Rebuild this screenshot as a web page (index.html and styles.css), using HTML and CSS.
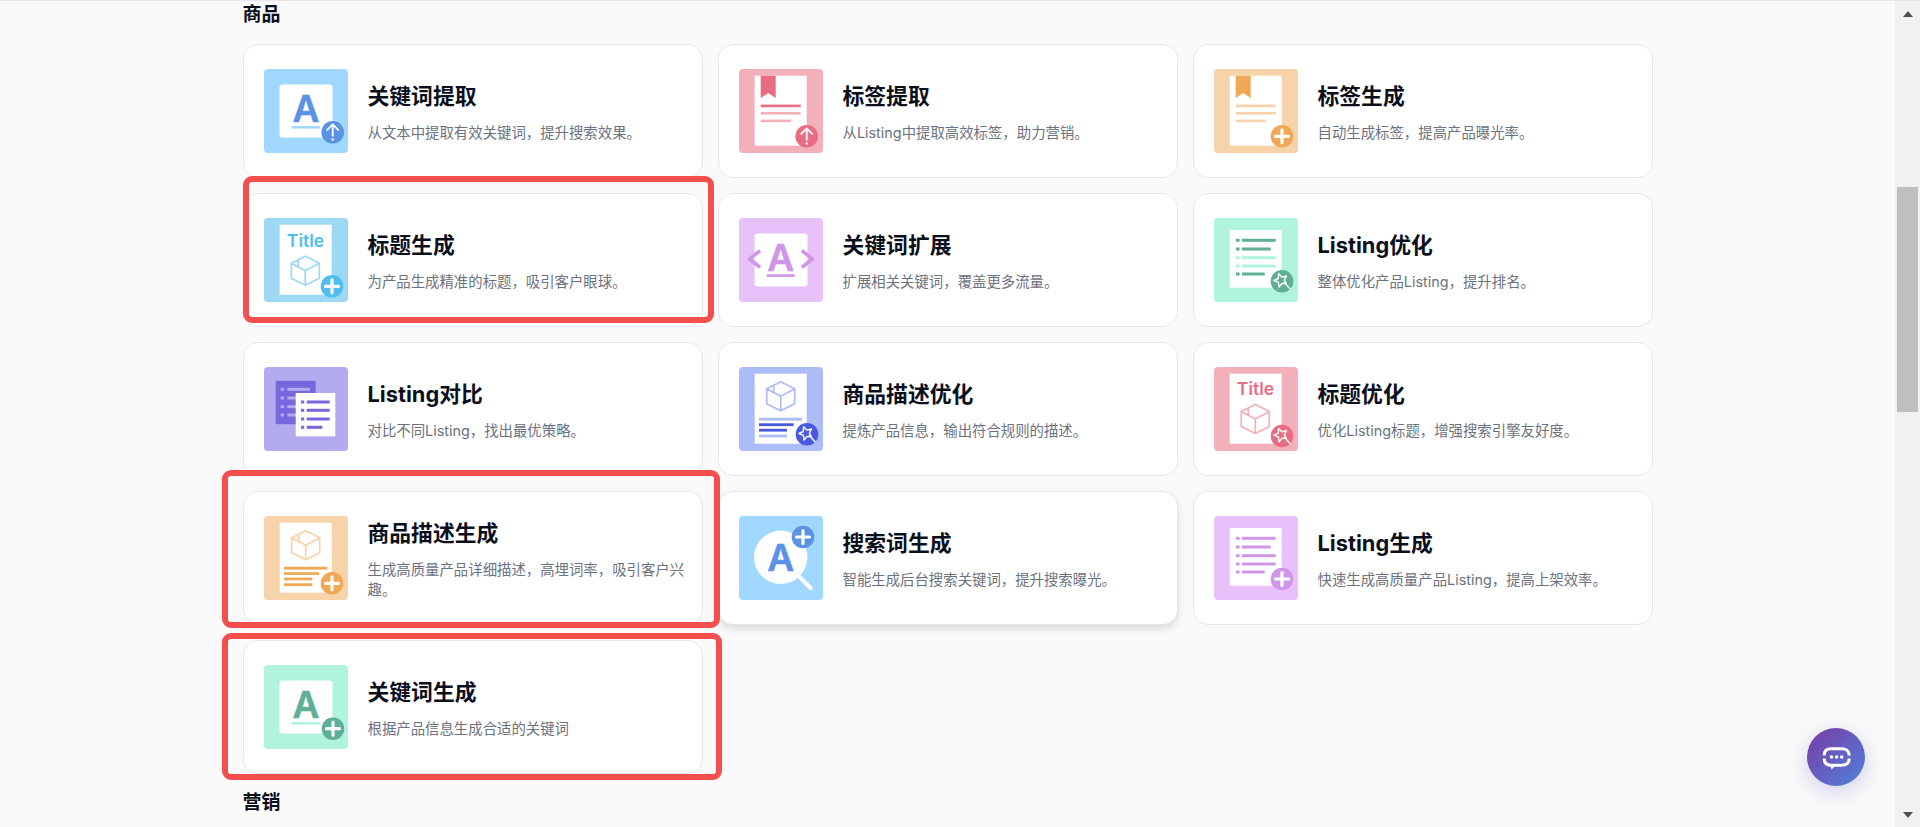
FILE: index.html
```html
<!DOCTYPE html>
<html lang="zh-CN">
<head>
<meta charset="utf-8">
<title>商品</title>
<link rel="stylesheet" href="styles.css">
</head>
<body>
<svg class="defs" aria-hidden="true">
  <defs>
    <g id="b-plus"><circle class="fg" r="11.3"/><path class="w-thick" d="M-6.5 0H6.5M0-6.5V6.5"/></g>
    <g id="b-up"><circle class="fg" r="11.3"/><path class="w-thin" d="M0 3.5V-7.5M-5.5-2.5L0-8L5.5-2.5"/><circle class="wf" cy="7.2" r="1.2"/></g>
    <g id="b-star"><circle class="fg" r="11.3"/><path class="w-star" d="M-3.4-7.6L-.1-4.2L4.5-5.3L2.3-1.1L4.4 2.4L.1 2.1L-2.9 5.7L-3.6 1L-8-.8L-3.7-2.8ZM2.5 1.5L8 7.5"/></g>
    <g id="cube"><path class="cube" d="M0-14.5L14-7.5V7.5L0 14.5L-14 7.5V-7.5ZM-14-7.5L0 0L14-7.5M0 0V14.5M-7-11V-3.5"/></g>
    <g id="doc"><rect class="pg" x="15.7" y="6.7" width="52" height="70"/></g>
    <g id="doc-s"><rect class="pg" x="15.7" y="12" width="52" height="57.7"/></g>
    <g id="sq"><rect class="pg" x="15.5" y="15.5" width="53" height="53" rx="3"/></g>
  </defs>
</svg>
<div class="page">
  <main class="main">
    <h2 class="section">商品</h2>
    <div class="grid">

      <a class="card">
        <svg class="icon t-blue" viewBox="0 0 84 84"><rect class="bg" width="84" height="84" rx="4"/><use href="#sq"/><text class="glyph" x="42" y="53" text-anchor="middle">A</text><rect class="lb" x="28" y="57" width="28" height="2.6"/><use href="#b-up" x="68.7" y="63.3"/></svg>
        <div class="text"><h3 class="name">关键词提取</h3><p class="desc">从文本中提取有效关键词，提升搜索效果。</p></div>
      </a>

      <a class="card">
        <svg class="icon t-pink" viewBox="0 0 84 84"><rect class="bg" width="84" height="84" rx="4"/><use href="#doc"/><path class="fg" d="M21.7 6.7H36.7V29L29.2 24L21.7 29Z"/><rect class="fg" x="21.7" y="35.6" width="40" height="2.6"/><rect class="lb" x="21.7" y="43" width="40" height="2.6"/><rect class="lb" x="21.7" y="50.6" width="30.3" height="2.6"/><use href="#b-up" x="67.7" y="67.3"/></svg>
        <div class="text"><h3 class="name">标签提取</h3><p class="desc">从Listing中提取高效标签，助力营销。</p></div>
      </a>

      <a class="card">
        <svg class="icon t-orange" viewBox="0 0 84 84"><rect class="bg" width="84" height="84" rx="4"/><use href="#doc"/><path class="fg" d="M21.7 6.7H36.7V29L29.2 24L21.7 29Z"/><rect class="lb" x="21.7" y="35.6" width="40" height="2.6"/><rect class="lb" x="21.7" y="43" width="40" height="2.6"/><rect class="lb" x="21.7" y="50.6" width="30.3" height="2.6"/><use href="#b-plus" x="68" y="67.3"/></svg>
        <div class="text"><h3 class="name">标签生成</h3><p class="desc">自动生成标签，提高产品曝光率。</p></div>
      </a>

      <a class="card">
        <svg class="icon t-sky" viewBox="0 0 84 84"><rect class="bg" width="84" height="84" rx="4"/><use href="#doc"/><text class="tword" x="41.5" y="29" text-anchor="middle">Title</text><use href="#cube" x="41.3" y="52.7"/><use href="#b-plus" x="68" y="68.3"/></svg>
        <div class="text"><h3 class="name">标题生成</h3><p class="desc">为产品生成精准的标题，吸引客户眼球。</p></div>
      </a>

      <a class="card">
        <svg class="icon t-purple" viewBox="0 0 84 84"><rect class="bg" width="84" height="84" rx="4"/><use href="#sq"/><text class="glyph" x="41.7" y="53" text-anchor="middle">A</text><rect class="lb2" x="27.7" y="56.3" width="28" height="2.6"/><path class="chev" d="M20 33.5L10.5 41L20 48.5M64 33.5L73.5 41L64 48.5"/></svg>
        <div class="text"><h3 class="name">关键词扩展</h3><p class="desc">扩展相关关键词，覆盖更多流量。</p></div>
      </a>

      <a class="card">
        <svg class="icon t-teal" viewBox="0 0 84 84"><rect class="bg" width="84" height="84" rx="4"/><use href="#doc-s"/>
          <rect class="fg" x="22" y="20.8" width="3.6" height="3"/><rect class="fg" x="28" y="20.8" width="33.7" height="3"/>
          <rect class="fg" x="22" y="29.5" width="3.6" height="3"/><rect class="fg" x="28" y="29.5" width="28.7" height="3"/>
          <rect class="lb" x="22" y="38.2" width="3.6" height="3"/><rect class="lb" x="28" y="38.2" width="33.7" height="3"/>
          <rect class="lb" x="22" y="46.5" width="3.6" height="3"/><rect class="lb" x="28" y="46.5" width="33.7" height="3"/>
          <rect class="fg" x="22" y="54.5" width="3.6" height="3"/><rect class="fg" x="28" y="54.5" width="22.7" height="3"/>
          <use href="#b-star" x="68" y="63.3"/></svg>
        <div class="text"><h3 class="name">Listing优化</h3><p class="desc">整体优化产品Listing，提升排名。</p></div>
      </a>

      <a class="card">
        <svg class="icon t-violet" viewBox="0 0 84 84"><rect class="bg" width="84" height="84" rx="4"/><rect class="fg" x="11.7" y="13.7" width="40" height="43.6" rx="1"/>
          <rect class="lb" x="16.7" y="20.8" width="3.3" height="3"/><rect class="lb" x="23.3" y="20.8" width="22.7" height="3"/>
          <rect class="lb" x="16.7" y="29.5" width="3.3" height="3"/><rect class="lb" x="23.3" y="29.5" width="22.7" height="3"/>
          <rect class="lb" x="16.7" y="38.2" width="3.3" height="3"/><rect class="lb" x="23.3" y="38.2" width="22.7" height="3"/>
          <rect class="lb" x="16.7" y="46.5" width="3.3" height="3"/><rect class="lb" x="23.3" y="46.5" width="22.7" height="3"/>
          <rect class="pg" x="31.7" y="26" width="39.6" height="43.3"/>
          <rect class="fg" x="37" y="33.5" width="3.2" height="3"/><rect class="fg" x="42.7" y="33.5" width="23" height="3"/>
          <rect class="fg" x="37" y="41.8" width="3.2" height="3"/><rect class="fg" x="42.7" y="41.8" width="23" height="3"/>
          <rect class="fg" x="37" y="50.5" width="3.2" height="3"/><rect class="fg" x="42.7" y="50.5" width="23" height="3"/>
          <rect class="fg" x="37" y="58.8" width="3.2" height="3"/><rect class="fg" x="42.7" y="58.8" width="15.6" height="3"/></svg>
        <div class="text"><h3 class="name">Listing对比</h3><p class="desc">对比不同Listing，找出最优策略。</p></div>
      </a>

      <a class="card">
        <svg class="icon t-peri" viewBox="0 0 84 84"><rect class="bg" width="84" height="84" rx="4"/><use href="#doc"/><use href="#cube" x="41.7" y="29.3"/>
          <rect class="lb" x="20" y="50.8" width="43" height="2.8"/><rect class="fg" x="20" y="56.3" width="34.7" height="2.8"/><rect class="fg" x="20" y="61.8" width="28" height="2.8"/><rect class="lb" x="20" y="67.6" width="28" height="2.8"/>
          <use href="#b-star" x="68" y="67.3"/></svg>
        <div class="text"><h3 class="name">商品描述优化</h3><p class="desc">提炼产品信息，输出符合规则的描述。</p></div>
      </a>

      <a class="card">
        <svg class="icon t-pink" viewBox="0 0 84 84"><rect class="bg" width="84" height="84" rx="4"/><use href="#doc"/><text class="tword" x="41.5" y="27.7" text-anchor="middle">Title</text><use href="#cube" x="41.3" y="52"/><use href="#b-star" x="68" y="69"/></svg>
        <div class="text"><h3 class="name">标题优化</h3><p class="desc">优化Listing标题，增强搜索引擎友好度。</p></div>
      </a>

      <a class="card">
        <svg class="icon t-orange" viewBox="0 0 84 84"><rect class="bg" width="84" height="84" rx="4"/><use href="#doc"/><use href="#cube" x="41.7" y="29.3"/>
          <rect class="fg" x="20" y="50.8" width="43.3" height="2.8"/><rect class="fg" x="20" y="56.2" width="35" height="2.8"/><rect class="fg" x="20" y="61.6" width="28.3" height="2.8"/><rect class="fg" x="20" y="67.3" width="28.3" height="2.8"/>
          <use href="#b-plus" x="68" y="67.3"/></svg>
        <div class="text"><h3 class="name">商品描述生成</h3><p class="desc">生成高质量产品详细描述，高埋词率，吸引客户兴趣。</p></div>
      </a>

      <a class="card card-raised">
        <svg class="icon t-blue" viewBox="0 0 84 84"><rect class="bg" width="84" height="84" rx="4"/><path class="handle" d="M60 60.3L71.7 72"/><circle class="pg" cx="41.7" cy="41.3" r="26.7"/><text class="glyph" x="41.7" y="55" text-anchor="middle">A</text><use href="#b-plus" x="64" y="21"/></svg>
        <div class="text"><h3 class="name">搜索词生成</h3><p class="desc">智能生成后台搜索关键词，提升搜索曝光。</p></div>
      </a>

      <a class="card">
        <svg class="icon t-purple" viewBox="0 0 84 84"><rect class="bg" width="84" height="84" rx="4"/><use href="#doc-s"/>
          <rect class="fg" x="22" y="20.8" width="3.6" height="3"/><rect class="fg" x="28" y="20.8" width="33.7" height="3"/>
          <rect class="fg" x="22" y="29.5" width="3.6" height="3"/><rect class="fg" x="28" y="29.5" width="28.7" height="3"/>
          <rect class="fg" x="22" y="38.2" width="3.6" height="3"/><rect class="fg" x="28" y="38.2" width="33.7" height="3"/>
          <rect class="fg" x="22" y="46.5" width="3.6" height="3"/><rect class="fg" x="28" y="46.5" width="33.7" height="3"/>
          <rect class="fg" x="22" y="54.5" width="3.6" height="3"/><rect class="fg" x="28" y="54.5" width="22.7" height="3"/>
          <use href="#b-plus" x="68" y="63"/></svg>
        <div class="text"><h3 class="name">Listing生成</h3><p class="desc">快速生成高质量产品Listing，提高上架效率。</p></div>
      </a>

      <a class="card">
        <svg class="icon t-teal" viewBox="0 0 84 84"><rect class="bg" width="84" height="84" rx="4"/><use href="#sq"/><text class="glyph" x="42" y="53" text-anchor="middle">A</text><rect class="lb" x="28" y="57" width="28" height="2.6"/><use href="#b-plus" x="69" y="63.7"/></svg>
        <div class="text"><h3 class="name">关键词生成</h3><p class="desc">根据产品信息生成合适的关键词</p></div>
      </a>

    </div>
    <h2 class="section section-next">营销</h2>
  </main>
  <div class="scrollbar">
    <span class="arrow arrow-up"></span>
    <span class="thumb"></span>
    <span class="arrow arrow-down"></span>
  </div>
</div>

<div class="mark mark-a"></div>
<div class="mark mark-b"></div>
<div class="mark mark-c"></div>

<button class="chat" type="button" aria-label="聊天">
  <svg class="chat-icon" viewBox="0 0 58 58">
    <path class="chat-line" d="M17.2 27.5C17.2 23 20 20.8 24 20.8H35C39 20.8 42.2 23 42.2 27.5M17.2 30.5C17.2 35 20 37.2 24 37.2H35C39 37.2 42.2 35 42.2 30.5"/>
    <path class="chat-fill" d="M23 37H29L24.5 41.5Z"/>
    <circle class="chat-fill" cx="24.5" cy="29" r="1.8"/><circle class="chat-fill" cx="29.6" cy="29" r="1.8"/><circle class="chat-fill" cx="34.7" cy="29" r="1.8"/>
  </svg>
</button>
</body>
</html>
```
FILE: styles.css
```css
* { box-sizing: border-box; }
html, body { margin: 0; height: 100%; overflow: hidden; }
body {
  background: #fafafa;
  color: #0b0f1c;
  font-family: Inter, "Noto Sans CJK SC", sans-serif;
}
.defs { position: absolute; width: 0; height: 0; }
.page { display: flex; height: 100vh; border-top: 1px solid #e5e7eb; }
.main { flex: 1; min-width: 0; padding: 1.4px 242.5px 0; overflow: hidden; }
.section { margin: 0 0 16px; font-size: 19px; line-height: 26px; font-weight: 700; }
.section-next { margin: 16px 0 0; }
.grid {
  display: grid;
  grid-template-columns: repeat(3, 1fr);
  grid-auto-rows: 134px;
  gap: 15px;
}
.card {
  display: flex;
  align-items: center;
  gap: 20px;
  padding: 0 15px 0 20px;
  background: #fff;
  border: 1px solid #e5e7eb;
  border-radius: 15px;
}
.card-raised { box-shadow: 0 4px 8px rgba(0, 0, 0, .13); }
.icon { flex: none; width: 84px; height: 84px; }
.text { min-width: 0; }
.name { margin: 0 0 10.6px; font-size: 21.8px; line-height: 32px; font-weight: 700; color: #0b0f1c; }
.desc { margin: 0; font-size: 14.4px; line-height: 20px; color: #6b7280; }

.t-blue { --bg: #a0d8ff; --fg: #5a92e6; }
.t-pink { --bg: #f4b0b8; --fg: #ea6c82; }
.t-orange { --bg: #f7d3a9; --fg: #f0a855; }
.t-sky { --bg: #9dd8f5; --fg: #50bff0; }
.t-purple { --bg: #e9c1fa; --fg: #d096e8; }
.t-teal { --bg: #b0f3de; --fg: #5fae97; }
.t-violet { --bg: #b3abef; --fg: #7468dc; }
.t-peri { --bg: #abbcf7; --fg: #4a5ae0; }

.bg, .lb { fill: var(--bg); }
.fg { fill: var(--fg); }
.lb2 { fill: var(--fg); }
.pg { fill: #fff; }
.wf { fill: #fff; }
.w-thick { fill: none; stroke: #fff; stroke-width: 3.2; stroke-linecap: round; }
.w-thin { fill: none; stroke: #fff; stroke-width: 1.8; stroke-linejoin: round; stroke-linecap: round; }
.w-star { fill: none; stroke: #fff; stroke-width: 1.4; stroke-linejoin: round; stroke-linecap: round; }
.cube { fill: none; stroke: var(--bg); stroke-width: 1.7; stroke-linejoin: round; stroke-linecap: round; }
.chev { fill: none; stroke: var(--fg); stroke-width: 3.6; stroke-linejoin: round; stroke-linecap: round; }
.handle { fill: none; stroke: #fff; stroke-width: 4; stroke-linecap: round; }
.glyph {
  font-family: Inter, sans-serif;
  font-size: 37px;
  font-weight: 600;
  fill: var(--fg);
  stroke: var(--fg);
  stroke-width: .6;
  stroke-linejoin: round;
}
.tword { font-family: Inter, sans-serif; font-size: 17.5px; font-weight: 600; fill: var(--fg); }

.scrollbar { flex: none; display: flex; flex-direction: column; align-items: center; width: 25px; background: #f1f1f1; }
.arrow { width: 0; height: 0; border-left: 5.5px solid transparent; border-right: 5.5px solid transparent; }
.arrow-up { margin-top: 10px; border-bottom: 6px solid #505050; }
.arrow-down { margin-top: auto; margin-bottom: 9px; border-top: 6px solid #505050; }
.thumb { width: 21px; height: 225px; margin-top: 170px; background: #bfbfbf; }

.mark { position: absolute; border: 6px solid #f54f4d; border-radius: 9px; pointer-events: none; }
.mark-a { left: 243px; top: 175.5px; width: 471px; height: 147px; }
.mark-b { left: 222px; top: 469.5px; width: 498px; height: 158px; }
.mark-c { left: 222px; top: 633px; width: 500px; height: 147px; }

.chat {
  position: absolute;
  left: 1807px;
  top: 728px;
  width: 58px;
  height: 58px;
  padding: 0;
  border: 0;
  border-radius: 50%;
  background: linear-gradient(135deg, #7a3aa5, #4f82dc);
  box-shadow: 0 6px 22px rgba(88, 80, 190, .25);
}
.chat-icon { display: block; width: 58px; height: 58px; }
.chat-line { fill: none; stroke: #fff; stroke-width: 3; stroke-linecap: butt; }
.chat-fill { fill: #fff; }
```
